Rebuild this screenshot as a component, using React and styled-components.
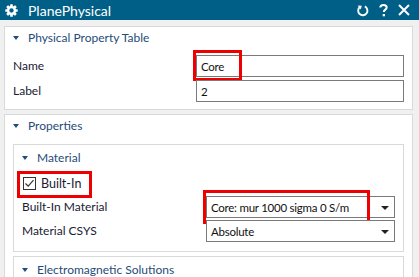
import React from "react";
import styled, { createGlobalStyle } from "styled-components";

const Global = createGlobalStyle`
  html, body { margin: 0; padding: 0; background: #f0f0f0; }
  body { font-family: Lato, "Noto Sans", sans-serif; }
  * { box-sizing: border-box; }
`;

const Window = styled.div`
  width: 419px;
  height: 277px;
  overflow: hidden;
  background: #f0f0f0;
  display: flex;
  flex-direction: column;
`;

const TitleBar = styled.div`
  height: 20px;
  flex: none;
  background: #005f87;
  display: flex;
  align-items: center;
  padding: 0 9px 0 5px;
  color: #fff;
`;

const TitleText = styled.span`
  font-size: 14px;
  margin-left: 10px;
  flex: 1;
`;

const TitleIcons = styled.div`
  display: flex;
  align-items: center;
  gap: 10px;
`;

const Content = styled.div`
  padding: 6px 6px 0 4px;
  display: flex;
  flex-direction: column;
  gap: 4px;
`;

const Panel = styled.div`
  background: #fff;
  border: 1px solid #d9d9d9;
  padding: ${(p) => p.$pad || "0 8px 7px 8px"};
`;

const Header = styled.div`
  height: ${(p) => p.$h || 26}px;
  padding-bottom: ${(p) => p.$pb || 0}px;
  display: flex;
  align-items: center;
  color: #1f4c78;
  font-size: 12px;
  gap: 9px;
`;

const Arrow = styled.span`
  width: 0;
  height: 0;
  border-left: 3.5px solid transparent;
  border-right: 3.5px solid transparent;
  border-top: 4px solid #1f4c78;
  margin-top: 1px;
`;

const Grid = styled.div`
  display: grid;
  grid-template-columns: ${(p) => p.$label}px 1fr;
  row-gap: ${(p) => p.$gap || 3}px;
  align-items: center;
`;

const Label = styled.div`
  font-size: 12px;
  color: #1a1a33;
  height: 22px;
  line-height: 22px;
  white-space: nowrap;
`;

const Field = styled.div`
  position: relative;
  height: 22px;
  border: 1px solid #7a7a7a;
  background: #fff;
  font-size: 11.5px;
  letter-spacing: -0.25px;
  color: #111;
  display: flex;
  align-items: center;
  padding-left: 4px;
  white-space: nowrap;
`;

const SelectArrow = styled.span`
  position: absolute;
  right: 5px;
  top: 9px;
  width: 0;
  height: 0;
  border-left: 4px solid transparent;
  border-right: 4px solid transparent;
  border-top: 4px solid #222;
`;

const Highlight = styled.div`
  position: absolute;
  border: 3px solid #ee0000;
  pointer-events: none;
  left: ${(p) => p.$l}px;
  top: ${(p) => p.$t}px;
  width: ${(p) => p.$w}px;
  height: ${(p) => p.$h}px;
`;

const SubStack = styled.div`
  display: flex;
  flex-direction: column;
  gap: 4px;
`;

const SubPanel = styled.div`
  border: 1px solid #d9d9d9;
  background: #fff;
  padding: 0 8px 9px 8px;
`;

const CheckRow = styled.div`
  position: relative;
  height: 22px;
  display: flex;
  align-items: center;
  gap: 5px;
  padding-left: 1px;
  grid-column: 1 / span 2;
  font-size: 12.5px;
  color: #1a1a33;
`;

const Box = styled.span`
  width: 13px;
  height: 13px;
  border: 1px solid #333;
  background: #fff;
  display: flex;
  align-items: center;
  justify-content: center;
`;

const Gear = () => (
  <svg width="13" height="13" viewBox="0 0 24 24">
    <g fill="#fff">
      {[0, 45, 90, 135, 180, 225, 270, 315].map((a) => (
        <rect key={a} x="9.5" y="0.5" width="5" height="6" rx="1" transform={`rotate(${a} 12 12)`} />
      ))}
      <circle cx="12" cy="12" r="8.5" />
    </g>
    <circle cx="12" cy="12" r="4" fill="#005f87" />
  </svg>
);

const Refresh = () => (
  <svg width="13" height="13" viewBox="0 0 14 14" fill="none">
    <path d="M4.2 3.2 A5 5 0 1 0 9.5 2.6" stroke="#fff" strokeWidth="2" />
    <path d="M1.8 1.6 L6.2 1.8 L5.2 6 Z" fill="#fff" />
  </svg>
);

const Question = () => (
  <svg width="9" height="13" viewBox="0 0 9 13" fill="none">
    <path d="M1.3 3.6 C1.3 1.9 2.6 1 4.5 1 C6.4 1 7.7 2 7.7 3.6 C7.7 5.6 4.8 5.7 4.8 8" stroke="#fff" strokeWidth="2" />
    <rect x="3.7" y="10" width="2.3" height="2.3" fill="#fff" />
  </svg>
);

const Close = () => (
  <svg width="12" height="12" viewBox="0 0 12 12">
    <path d="M1 1 L11 11 M11 1 L1 11" stroke="#fff" strokeWidth="2" />
  </svg>
);

const Check = () => (
  <svg width="11" height="11" viewBox="0 0 11 11" fill="none">
    <path d="M1.5 5.5 L4.2 8.2 L9.5 2.2" stroke="#333" strokeWidth="1.2" />
  </svg>
);

export default function App() {
  return (
    <Window>
      <Global />
      <TitleBar>
        <Gear />
        <TitleText>PlanePhysical</TitleText>
        <TitleIcons>
          <Refresh />
          <Question />
          <Close />
        </TitleIcons>
      </TitleBar>
      <Content>
        <Panel>
          <Header $h={28} $pb={7}>
            <Arrow />
            Physical Property Table
          </Header>
          <Grid $label={183}>
            <Label>Name</Label>
            <Field>
              Core
              <Highlight $l={-4} $t={-6} $w={49} $h={31} />
            </Field>
            <Label>Label</Label>
            <Field>2</Field>
          </Grid>
        </Panel>
        <Panel $pad="0 8px 0 8px">
          <Header $h={29} $pb={8}>
            <Arrow />
            Properties
          </Header>
          <SubStack>
            <SubPanel>
              <Header $h={27} $pb={2}>
                <Arrow />
                Material
              </Header>
              <Grid $label={184} $gap={2}>
                <CheckRow>
                  <Box>
                    <Check />
                  </Box>
                  Built-In
                  <Highlight $l={-5} $t={-1} $w={75} $h={27} />
                </CheckRow>
                <Label>Built-In Material</Label>
                <Field>
                  Core: mur 1000 sigma 0 S/m
                  <SelectArrow />
                  <Highlight $l={-4} $t={-7} $w={167} $h={34} />
                </Field>
                <Label>Material CSYS</Label>
                <Field>
                  Absolute
                  <SelectArrow />
                </Field>
              </Grid>
            </SubPanel>
            <SubPanel>
              <Header $h={24}>
                <Arrow />
                Electromagnetic Solutions
              </Header>
            </SubPanel>
          </SubStack>
        </Panel>
      </Content>
    </Window>
  );
}
